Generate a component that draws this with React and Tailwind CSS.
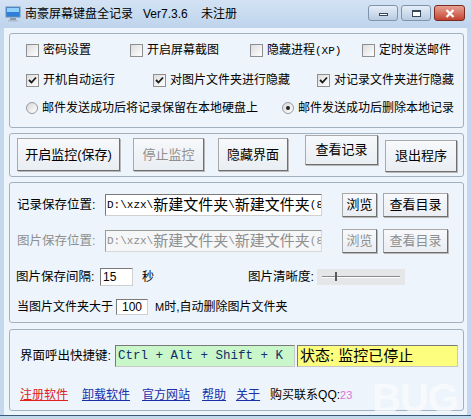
import React from 'react';

function CheckBox({ checked, label, className = '' }) {
  return (
    <div className={`flex items-center h-[16px] ${className}`}>
      <span className="w-[13px] h-[13px] border border-[#8f8f8f] bg-gradient-to-br from-[#dcdcdc] to-white flex items-center justify-center shrink-0">
        {checked && (
          <svg width="9" height="9" viewBox="0 0 9 9">
            <path d="M1 4 L3.5 6.5 L8 1.5" stroke="#1a1a1a" strokeWidth="1.8" fill="none" />
          </svg>
        )}
      </span>
      <span className="ml-[4px] whitespace-nowrap">{label}</span>
    </div>
  );
}

function Radio({ checked, label, className = '' }) {
  return (
    <div className={`flex items-center h-[16px] ${className}`}>
      <span className="w-[12px] h-[12px] rounded-full border border-[#9a9a9a] bg-gradient-to-br from-[#d8d8d8] to-white flex items-center justify-center shrink-0">
        {checked && <span className="w-[4px] h-[4px] rounded-full bg-[#222]" />}
      </span>
      <span className="ml-[4px] whitespace-nowrap">{label}</span>
    </div>
  );
}

function Btn({ children, disabled, className = '' }) {
  return (
    <div
      className={`flex items-center justify-center border border-[#a9a9a9] border-r-[#6f6f6f] border-b-[#6f6f6f] bg-gradient-to-b from-[#f7f9fb] to-[#e9eef3] shadow-[1px_1px_0_#b8b8b8] text-[13px] whitespace-nowrap ${disabled ? 'text-[#8f8f8f]' : 'text-black'} ${className}`}
    >
      {children}
    </div>
  );
}

function Group({ children, className = '' }) {
  return (
    <div className={`ml-[5px] w-[455px] border border-[#a3b1bf] rounded-[3px] ${className}`}>
      {children}
    </div>
  );
}

function PathText() {
  return (
    <>
      <span className="text-[11px] font-['Liberation_Mono',monospace]">D:\xzx\</span>
      <span>新建文件夹</span>
      <span className="text-[11px] font-['Liberation_Mono',monospace]">\</span>
      <span>新建文件夹</span>
      <span className="text-[11px] font-['Liberation_Mono',monospace]"> (8</span>
    </>
  );
}

export default function App() {
  return (
    <div className="w-[471px] h-[419px] bg-[#c3d7ed] flex flex-col overflow-hidden text-[12px] text-black font-['Liberation_Sans','Noto_Sans_CJK_SC',sans-serif] relative">
      {/* title bar */}
      <div className="h-[28px] flex items-start bg-gradient-to-b from-[#d3e3f4] to-[#bed4ec] shrink-0">
        <svg className="ml-[5px] mt-[6px]" width="16" height="16" viewBox="0 0 16 16">
          <rect x="1" y="1" width="14" height="10" fill="#2f7fd8" stroke="#6d8fb3" />
          <rect x="2" y="2" width="12" height="4" fill="#8fd0ff" />
          <rect x="5" y="12" width="6" height="2" fill="#8a9bb0" />
          <rect x="3" y="14" width="10" height="1.5" fill="#b0bccb" />
        </svg>
        <div className="ml-[4px] mt-[6px] whitespace-nowrap leading-[16px] text-[12px]">
          南豪屏幕键盘全记录&nbsp;&nbsp;&nbsp;Ver7.3.6&nbsp;&nbsp;&nbsp;&nbsp;未注册
        </div>
        <div className="ml-auto mr-[6px] mt-[5px] flex gap-[3px]">
          <div className="w-[30px] h-[16px] rounded-[3px] border border-[#7d94ae] bg-gradient-to-b from-[#e6eef8] to-[#b9cbe0] flex items-end justify-center pb-[4px]">
            <span className="w-[9px] h-[3px] border border-[#37475c] bg-white" />
          </div>
          <div className="w-[30px] h-[16px] rounded-[3px] border border-[#7d94ae] bg-gradient-to-b from-[#e6eef8] to-[#b9cbe0] flex items-center justify-center">
            <span className="w-[9px] h-[7px] border border-[#37475c] border-t-2 bg-white" />
          </div>
          <div className="w-[31px] h-[16px] rounded-[3px] border border-[#7a2b22] bg-gradient-to-b from-[#e7a093] to-[#c2412f] flex items-center justify-center">
            <svg width="10" height="9" viewBox="0 0 10 9">
              <path d="M1.5 1 L8.5 8 M8.5 1 L1.5 8" stroke="white" strokeWidth="2.2" />
            </svg>
          </div>
        </div>
      </div>

      {/* client */}
      <div className="mx-[4px] h-[387px] bg-[#edf4fb] flex flex-col">
        <Group className="mt-[5px] h-[95px] flex flex-col pl-[16px]">
          <div className="mt-[8px] flex">
            <CheckBox label="密码设置" className="w-[104px]" />
            <CheckBox label="开启屏幕截图" className="w-[120px]" />
            <CheckBox
              label={<span>隐藏进程<span className="font-['Liberation_Mono'] text-[11px]">(XP)</span></span>}
              className="w-[112px]"
            />
            <CheckBox label="定时发送邮件" />
          </div>
          <div className="mt-[14px] flex">
            <CheckBox checked label="开机自动运行" className="w-[127px]" />
            <CheckBox checked label="对图片文件夹进行隐藏" className="w-[164px]" />
            <CheckBox checked label="对记录文件夹进行隐藏" />
          </div>
          <div className="mt-[12px] flex">
            <Radio label="邮件发送成功后将记录保留在本地硬盘上" className="w-[256px]" />
            <Radio checked label="邮件发送成功后删除本地记录" />
          </div>
        </Group>

        <Group className="mt-[5px] h-[44px] flex items-start pl-[7px] pt-[4px]">
          <Btn className="w-[103px] h-[33px]">开启监控(保存)</Btn>
          <Btn disabled className="ml-[13px] w-[71px] h-[33px]">停止监控</Btn>
          <Btn className="ml-[14px] w-[70px] h-[33px]">隐藏界面</Btn>
          <Btn className="ml-[17px] w-[73px] h-[30px] -mt-[3px]">查看记录</Btn>
          <Btn className="ml-[7px] w-[72px] h-[32px] mt-[2px]">退出程序</Btn>
        </Group>

        <Group className="mt-[5px] h-[141px] flex flex-col pl-[7px] text-[12px]">
          <div className="mt-[10px] h-[24px] flex items-center">
            <span className="w-[88px] whitespace-nowrap text-[12.5px]">记录保存位置:</span>
            <div className="w-[217px] h-[22px] border border-[#7a7a7a] border-r-[#d0d0d0] border-b-[#d0d0d0] bg-white flex items-center overflow-hidden whitespace-nowrap text-[15px] pl-[1px]">
              <PathText />
            </div>
            <Btn className="ml-[20px] w-[35px] h-[24px] text-[12px]">浏览</Btn>
            <Btn className="ml-[6px] w-[65px] h-[24px] text-[13px]">查看目录</Btn>
          </div>
          <div className="mt-[12px] h-[24px] flex items-center text-[#8f8f8f]">
            <span className="w-[88px] whitespace-nowrap text-[12.5px]">图片保存位置:</span>
            <div className="w-[217px] h-[22px] border border-[#9a9a9a] border-r-[#d8d8d8] border-b-[#d8d8d8] bg-[#f4f6f8] flex items-center overflow-hidden whitespace-nowrap text-[15px] pl-[1px]">
              <PathText />
            </div>
            <Btn disabled className="ml-[20px] w-[35px] h-[24px] text-[12px]">浏览</Btn>
            <Btn disabled className="ml-[6px] w-[65px] h-[24px] text-[13px]">查看目录</Btn>
          </div>
          <div className="mt-[15px] h-[18px] flex items-center">
            <span className="w-[84px] whitespace-nowrap -ml-[1px] text-[12.5px]">图片保存间隔:</span>
            <div className="w-[33px] h-[18px] border border-[#7a7a7a] border-r-[#d0d0d0] border-b-[#d0d0d0] bg-white flex items-center pl-[2px] text-[12px]">
              15
            </div>
            <span className="ml-[9px] w-[106px]">秒</span>
            <span className="whitespace-nowrap w-[69px] text-[12.5px]">图片清晰度:</span>
            <div className="w-[88px] h-[16px] bg-[#e4e6e8] relative flex items-center">
              <span className="ml-[5px] w-[78px] h-[2px] border-t border-[#8a8a8a] border-b border-b-white" />
              <span className="absolute left-[18px] top-[3px] w-[2px] h-[9px] bg-[#5a5a5a]" />
            </div>
          </div>
          <div className="mt-[13px] h-[16px] flex items-center">
            <span className="w-[99px] whitespace-nowrap">当图片文件夹大于</span>
            <div className="w-[32px] h-[16px] border border-[#7a7a7a] border-r-[#d0d0d0] border-b-[#d0d0d0] bg-white flex items-center justify-center text-[12px]">
              100
            </div>
            <span className="ml-[7px] whitespace-nowrap">
              <span className="text-[11px]">M</span>时,自动删除图片文件夹
            </span>
          </div>
        </Group>

        <Group className="mt-[6px] h-[82px] flex flex-col pl-[10px] text-[12.5px]">
          <div className="mt-[15px] h-[22px] flex items-center">
            <span className="w-[95px] whitespace-nowrap">界面呼出快捷键:</span>
            <div className="w-[180px] h-[22px] border border-[#7a7a7a] border-r-[#c8c8c8] border-b-[#c8c8c8] bg-[#c9f7c9] flex items-center pl-[2px] whitespace-nowrap text-[12.5px] font-['Liberation_Mono',monospace] text-[#10306a]">
              Ctrl + Alt + Shift + K
            </div>
            <div className="ml-[2px] w-[161px] h-[22px] border border-[#7a7a7a] border-r-[#c8c8c8] border-b-[#c8c8c8] bg-[#fdfd7e] flex items-center pl-[2px] whitespace-nowrap text-[15px]">
              状态: 监控已停止
            </div>
          </div>
          <div className="mt-[19px] flex items-center whitespace-nowrap text-[12px]">
            <span className="text-[#e0201c] underline">注册软件</span>
            <span className="ml-[14px] text-[#1a2fa8] underline">卸载软件</span>
            <span className="ml-[12px] text-[#1a2fa8] underline">官方网站</span>
            <span className="ml-[12px] text-[#1a2fa8] underline">帮助</span>
            <span className="ml-[10px] text-[#1a2fa8] underline">关于</span>
            <span className="ml-[10px]">购买联系QQ:</span>
            <span className="text-[#e070d8] text-[11px]">23</span>
          </div>
        </Group>
      </div>
      <div className="h-[4px] border-t border-[#3d5a78] bg-[#c3d7ed]" />

      <div className="absolute left-[372px] top-[378px] text-[40px] font-bold leading-none text-white opacity-60 font-['Liberation_Sans',sans-serif] tracking-[-1px]">
        BUG
      </div>
    </div>
  );
}
